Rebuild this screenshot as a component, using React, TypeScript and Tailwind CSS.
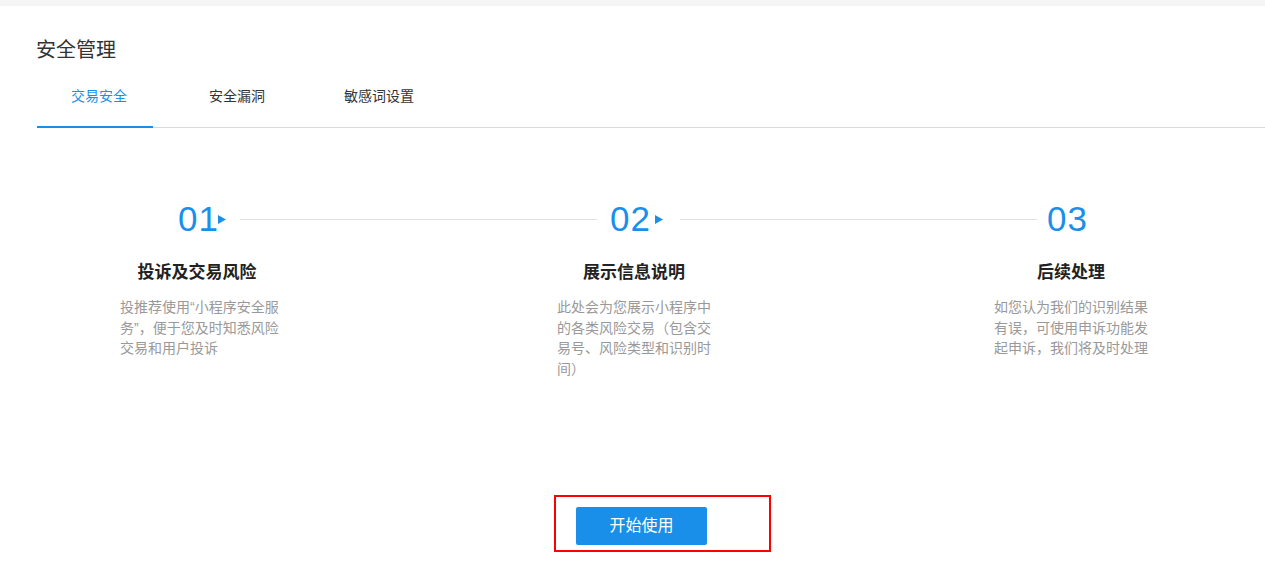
import React from "react";

const font = { fontFamily: '"Liberation Sans", "Noto Sans CJK SC", sans-serif' };

function Arrow() {
  return (
    <svg width="8" height="9" viewBox="0 0 8 9">
      <polygon points="0,0 8,4.5 0,9" fill="#1a8fea" />
    </svg>
  );
}

const steps = [
  {
    title: "投诉及交易风险",
    lines: ["投推荐使用“小程序安全服", "务”，便于您及时知悉风险", "交易和用户投诉"],
  },
  {
    title: "展示信息说明",
    lines: ["此处会为您展示小程序中", "的各类风险交易（包含交", "易号、风险类型和识别时", "间）"],
  },
  {
    title: "后续处理",
    lines: ["如您认为我们的识别结果", "有误，可使用申诉功能发", "起申诉，我们将及时处理"],
  },
];

export default function App() {
  return (
    <div className="w-[1265px] h-[570px] bg-white overflow-hidden" style={font}>
      <div className="h-[6px] bg-[#f5f5f6]" />
      <div className="pt-[32px] pl-[36px]">
        <h1 className="text-[20px] leading-[24px] text-[#333]">安全管理</h1>
      </div>
      <div className="mt-[14px] ml-[37px] flex border-b border-[#d9d9d9] h-[52px] items-end">
        <div className="w-[116px] pl-[34px] pt-[10px] pb-[20px] border-b-2 border-[#1a8fea] -mb-px text-[14px] leading-[20px] text-[#1a8fea]">
          交易安全
        </div>
        <div className="ml-[56px] pt-[10px] pb-[21px] text-[14px] leading-[20px] text-[#333]">安全漏洞</div>
        <div className="ml-[79px] pt-[10px] pb-[21px] text-[14px] leading-[20px] text-[#333]">敏感词设置</div>
      </div>

      <div className="mt-[71px] pl-[178px] flex items-center h-[40px]">
        <span className="w-[40px] text-[35px] leading-[40px] tracking-[1px] text-[#1a8fea] whitespace-nowrap">01</span>
        <Arrow />
        <div className="ml-[14px] w-[357px] h-px bg-[#e2e2e2]" />
        <span className="ml-[13px] w-[45px] text-[35px] leading-[40px] tracking-[1px] text-[#1a8fea] whitespace-nowrap">02</span>
        <Arrow />
        <div className="ml-[17px] w-[357px] h-px bg-[#e2e2e2]" />
        <span className="ml-[10px] text-[35px] leading-[40px] tracking-[1px] text-[#1a8fea] whitespace-nowrap">03</span>
      </div>

      <div className="mt-[22px] pl-[97px] flex items-start gap-[237px]">
        {steps.map((s) => (
          <div key={s.title} className="w-[200px]">
            <div className="text-center text-[17px] leading-[24px] font-bold text-[#222]">{s.title}</div>
            <div className="mt-[12px] ml-[23px] text-[14px] leading-[20.5px] text-[#999] whitespace-nowrap">
              {s.lines.map((l) => (
                <div key={l}>{l}</div>
              ))}
            </div>
          </div>
        ))}
      </div>

      <div className="mt-[116px] ml-[554px] w-[217px] h-[57px] border-2 border-[#ff0000] pl-[20px] pt-[10px]">
        <button className="w-[131px] h-[38px] rounded-[2px] bg-[#1a8fea] text-white text-[16px]">开始使用</button>
      </div>
    </div>
  );
}
